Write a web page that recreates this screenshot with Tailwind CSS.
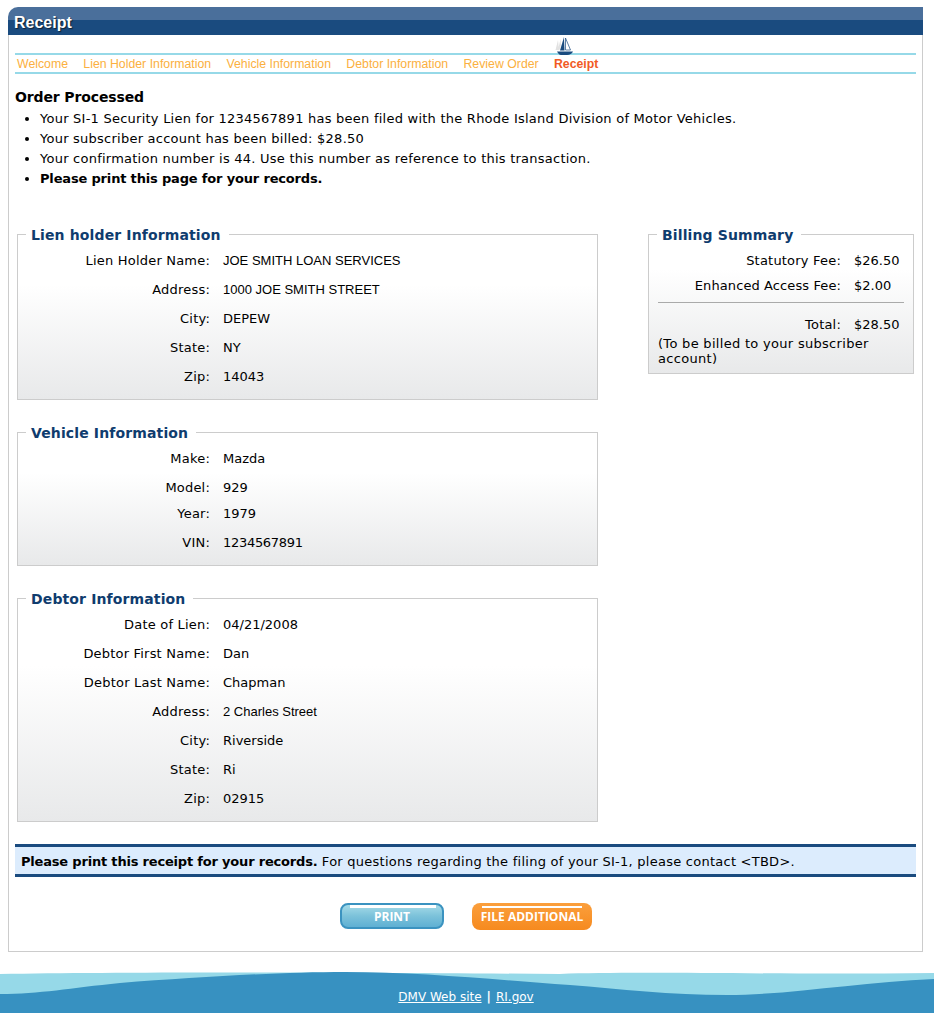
<!DOCTYPE html>
<html lang="en">
<head>
<meta charset="utf-8">
<title>Receipt</title>
<script src="https://cdn.jsdelivr.net/npm/@tailwindcss/browser@4"></script>
</head>
<body class="bg-white font-['DejaVu_Sans',sans-serif] text-[13px] text-black">
<div class="h-[1013px] overflow-hidden flex flex-col">
  <div class="ml-[8px] mt-[7px] w-[915px] h-[945px] flex flex-col">
    <div class="h-[28px] rounded-tl-[10px] bg-[linear-gradient(#4a6f9b_0,#4a6f9b_13px,#1a4b7f_13px,#1a4b7f_100%)] pl-[6px] pt-[7px] text-[16px] leading-[17px] font-bold text-white font-['Liberation_Sans',sans-serif] [text-shadow:1px_1px_1px_#123]">Receipt</div>
    <div class="flex-1 border-x border-b border-[#ccc] px-[6px] pt-[18px]">
      <nav class="relative h-[21px] border-y-2 border-[#96d9e8] flex items-center gap-[15.300px] pl-[2px] pt-[1px] text-[12.3px] text-[#fbb040] font-['Liberation_Sans',sans-serif]">
        <span>Welcome</span>
        <span>Lien Holder Information</span>
        <span>Vehicle Information</span>
        <span>Debtor Information</span>
        <span>Review Order</span>
        <span class="font-bold text-[#f15a24]">Receipt</span>
        <svg class="absolute left-[539px] top-[-18px]" width="22" height="19" viewBox="0 0 22 19">
          <path d="M1.500 13 4 3l1 10zM4 13 6.500 2 7 8 5.500 13z" fill="#e2e2e2"/>
          <path d="M10 0 6 13.500h4.500z" fill="#1a4b7f"/>
          <path d="M11.500 1l5 12h-5z" fill="#fff" stroke="#1a4b7f" stroke-width=".7"/>
          <path d="M3 14.500h16c-1 2.500-4 4-7 3.500H7c-2 0-3-2-4-3.500z" fill="#1a4b7f"/>
        </svg>
      </nav>
      <h1 class="mt-[14px] text-[14px] leading-[18px] font-bold tracking-[-.13px]">Order Processed</h1>
      <ul class="mt-[3px] list-disc pl-[25px] leading-[20px] tracking-[.24px]">
        <li>Your SI-1 Security Lien for 1234567891 has been filed with the Rhode Island Division of Motor Vehicles.</li>
        <li>Your subscriber account has been billed: $28.50</li>
        <li>Your confirmation number is 44. Use this number as reference to this transaction.</li>
        <li class="font-bold tracking-[-.17px]">Please print this page for your records.</li>
      </ul>
      <div class="mt-[35px] flex items-start gap-[50px] pl-[2px]">
        <div class="w-[581px] flex flex-col gap-[22px]">
          <fieldset class="border border-[#ccc] bg-[linear-gradient(#fff_30%,#e8e9ea_100%)] pb-[8px]">
            <legend class="ml-[8px] pl-[5px] pr-[8px] pt-[2px] text-[14px] leading-[18px] font-bold text-[#0f3c6e] tracking-[.13px]">Lien holder Information</legend>
            <div class="pt-[2px] grid grid-cols-[192px_1fr] gap-x-[13px] auto-rows-[29px] items-center">
              <span class="text-right tracking-[.2px]">Lien Holder Name:</span><span class="font-['Liberation_Sans',sans-serif]">JOE SMITH LOAN SERVICES</span>
              <span class="text-right tracking-[.2px]">Address:</span><span class="font-['Liberation_Sans',sans-serif]">1000 JOE SMITH STREET</span>
              <span class="text-right tracking-[.2px]">City:</span><span>DEPEW</span>
              <span class="text-right tracking-[.2px]">State:</span><span>NY</span>
              <span class="text-right tracking-[.2px]">Zip:</span><span>14043</span>
            </div>
          </fieldset>
          <fieldset class="border border-[#ccc] bg-[linear-gradient(#fff_30%,#e8e9ea_100%)] pb-[5px]">
            <legend class="ml-[8px] pl-[5px] pr-[8px] pt-[2px] text-[14px] leading-[18px] font-bold text-[#0f3c6e] tracking-[.13px]">Vehicle Information</legend>
            <div class="pt-[2px] grid grid-cols-[192px_1fr] gap-x-[13px] auto-rows-[29px] items-center">
              <span class="text-right tracking-[.2px]">Make:</span><span>Mazda</span>
              <span class="text-right tracking-[.2px]">Model:</span><span>929</span>
              <span class="text-right tracking-[.2px] -mt-[6px]">Year:</span><span class="-mt-[6px]">1979</span>
              <span class="text-right tracking-[.2px] -mt-[6px]">VIN:</span><span class="-mt-[6px] tracking-[-.3px]">1234567891</span>
            </div>
          </fieldset>
          <fieldset class="border border-[#ccc] bg-[linear-gradient(#fff_30%,#e8e9ea_100%)] pb-[8px]">
            <legend class="ml-[8px] pl-[5px] pr-[8px] pt-[2px] text-[14px] leading-[18px] font-bold text-[#0f3c6e] tracking-[.13px]">Debtor Information</legend>
            <div class="pt-[2px] grid grid-cols-[192px_1fr] gap-x-[13px] auto-rows-[29px] items-center">
              <span class="text-right tracking-[.2px]">Date of Lien:</span><span>04/21/2008</span>
              <span class="text-right tracking-[.2px]">Debtor First Name:</span><span>Dan</span>
              <span class="text-right tracking-[.2px]">Debtor Last Name:</span><span>Chapman</span>
              <span class="text-right tracking-[.2px]">Address:</span><span class="font-['Liberation_Sans',sans-serif]">2 Charles Street</span>
              <span class="text-right tracking-[.2px]">City:</span><span>Riverside</span>
              <span class="text-right tracking-[.2px]">State:</span><span>Ri</span>
              <span class="text-right tracking-[.2px]">Zip:</span><span>02915</span>
            </div>
          </fieldset>
        </div>
        <fieldset class="w-[266px] border border-[#ccc] bg-[linear-gradient(#fff_25%,#e8e9ea_100%)] px-[9px] pb-[7px]">
          <legend class="ml-[-1px] pl-[5px] pr-[8px] pt-[2px] text-[14px] leading-[18px] font-bold text-[#0f3c6e] tracking-[.13px]">Billing Summary</legend>
          <div class="pt-[4px] grid grid-cols-[183px_1fr] gap-x-[13px] auto-rows-[25px] items-center">
            <span class="text-right tracking-[.2px]">Statutory Fee:</span><span>$26.50</span>
            <span class="text-right tracking-[.1px]">Enhanced Access Fee:</span><span>$2.00</span>
          </div>
          <div class="mt-[4px] border-t border-[#aaa]"></div>
          <div class="mt-[14px] grid grid-cols-[183px_1fr] gap-x-[13px] items-center leading-[16px]">
            <span class="text-right tracking-[.2px]">Total:</span><span>$28.50</span>
          </div>
          <p class="mt-[3px] leading-[15px] tracking-[.3px]">(To be billed to your subscriber account)</p>
        </fieldset>
      </div>
      <div class="mt-[22px] h-[33px] border-y-[3px] border-[#1a4b7f] bg-[#dcecfd] pl-[6px] pt-[1px] leading-[27px] tracking-[.25px]"><b class="tracking-[-.19px]">Please print this receipt for your records.</b> For questions regarding the filing of your SI-1, please contact &lt;TBD&gt;.</div>
      <div class="mt-[26px] flex items-start gap-[28px] pl-[325px] font-['Open_Sans',sans-serif] text-[12px] font-bold text-white [text-shadow:0_0_2px_#ffffff80]">
        <button class="relative h-[26px] w-[104px] rounded-[8px] border-2 border-[#3b93c0] pt-[1px] bg-[linear-gradient(#a5dbe8,#7cc2da_50%,#5fb0d3)]"><span class="absolute left-[8px] right-[6px] top-[0px] h-[3px] bg-white"></span>PRINT</button>
        <button class="relative h-[27px] w-[120px] rounded-[8px] bg-[linear-gradient(#fb9f3c,#f68a1f)]"><span class="absolute left-[10px] right-[10px] top-[3px] h-[2px] bg-white"></span>FILE ADDITIONAL</button>
      </div>
    </div>
  </div>
  <footer class="relative mt-[20px] flex-1 text-white">
    <svg class="absolute inset-0" width="934" height="41" viewBox="0 0 934 41" preserveAspectRatio="none">
      <path d="M0 2 C120 0 300 0 560 2 C640 -1 780 3 934 1 V41 H0Z" fill="#96d9e8"/>
      <path d="M0 22 C40 22 70 16 120 11 C200 5 280 0 345 0 C420 0 500 8 570 13 C620 17 670 23 727 23 C790 23 860 10 934 7 V41 H0Z" fill="#3791c1"/>
    </svg>
    <p class="relative pt-[16px] pr-[2px] flex justify-center gap-[5px] text-[12px]"><a href="#" class="underline">DMV Web site</a><span class="font-bold">|</span><a href="#" class="underline">RI.gov</a></p>
  </footer>
</div>
</body>
</html>
